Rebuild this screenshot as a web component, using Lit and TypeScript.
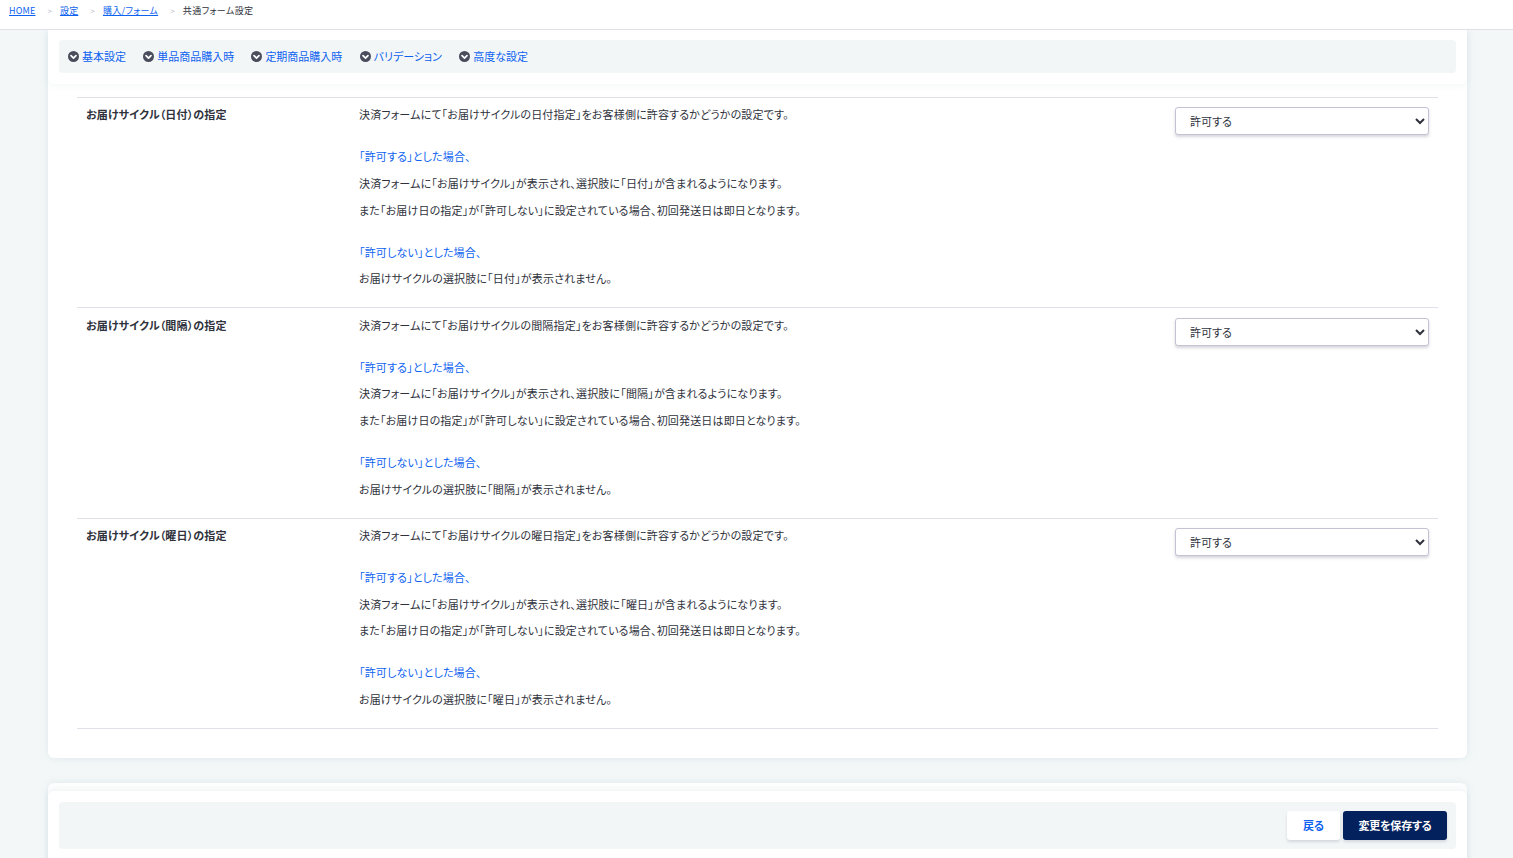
import { LitElement, html, css } from "lit";
import { customElement } from "lit/decorators.js";

const FONT = css`"Noto Sans CJK JP", "Noto Sans", sans-serif`;

@customElement("app-root")
export class AppRoot extends LitElement {
  static styles = css`
    :host {
      display: block;
      height: 858px;
      overflow: hidden;
      background: #f3f7f8;
      font-family: ${FONT};
      font-size: 11px;
      line-height: 15.4px;
      color: #2f323c;
      font-feature-settings: "palt";
    }
    a { color: #0d62f0; }
    .crumbs {
      height: 30px;
      box-sizing: border-box;
      background: #fff;
      border-bottom: 1px solid #e0e0ea;
      display: flex;
      align-items: flex-start;
      padding: 2.6px 0 0 9px;
      font-size: 9px;
      letter-spacing: 0.15px;
      position: relative;
      z-index: 1;
    }
    .crumbs a { text-decoration: underline; }
    .crumbs a.wide { letter-spacing: 0.3px; }
    .crumbs .sep { color: #b5b8c4; margin: 0 8px 0 12px; font-size: 8px; }
    .crumbs .cur { color: #2f323c; letter-spacing: 0.4px; }
    .wrap { padding: 0 46px 0 48px; }
    .section {
      background: #fff;
      border-radius: 0 0 6px 6px;
      box-shadow: 0 0 9px rgba(110, 150, 170, 0.14);
    }
    .nav-card {
      padding: 10px 11px 11px;
      height: 54px;
      box-sizing: border-box;
      background: #fff;
      border-radius: 0 0 6px 6px;
      box-shadow: 0 2px 6px rgba(120, 150, 170, 0.07);
    }
    .nav {
      height: 33px;
      box-sizing: border-box;
      background: #f3f6f7;
      border-radius: 4px;
      display: flex;
      align-items: center;
      padding-left: 9px;
      gap: 17.2px;
    }
    .nav a {
      display: flex;
      align-items: center;
      gap: 3px;
      text-decoration: none;
    }
    .nav svg { width: 11px; height: 11px; display: block; }
    .form-card { padding: 13px 29px 29px; }
    .row {
      display: grid;
      grid-template-columns: 273px 1fr 254px;
      padding: 9.4px 9px 0;
      border-top: 1px solid #e0e0ea;
      height: 210.4px;
      box-sizing: border-box;
    }
    .rows { border-bottom: 1px solid #e0e0ea; }
    .label { font-weight: 700; letter-spacing: 0.15px; }
    .desc { letter-spacing: 0.165px; }
    .desc p { margin: 0 0 11.2px; }
    .desc .head { margin-top: 26.6px; color: #0d62f0; }
    select {
      display: block;
      width: 254px;
      height: 28px;
      box-sizing: border-box;
      border: 1px solid #c3c3d3;
      border-radius: 3px;
      background: #fff;
      box-shadow: 0 2px 3px rgba(90, 90, 120, 0.25);
      padding: 0 0 0 10px;
      font-family: inherit;
      font-size: 11px;
      color: #2f323c;
      font-feature-settings: "palt";
    }
    .bottom-section {
      margin-top: 25px;
      height: 100px;
      padding-top: 8px;
      background: #fcfdfd;
      border-radius: 6px 6px 0 0;
      box-shadow: 0 0 9px rgba(110, 150, 170, 0.14);
    }
    .bottom-card {
      height: 92px;
      box-sizing: border-box;
      background: #fff;
      border-radius: 6px 6px 0 0;
      box-shadow: 0 -1px 5px rgba(120, 150, 170, 0.1);
      padding: 11px 11px 0;
    }
    .actions {
      height: 47px;
      box-sizing: border-box;
      background: #f3f6f7;
      border-radius: 4px;
      display: flex;
      justify-content: flex-end;
      align-items: center;
      gap: 3px;
      padding: 0 9px;
    }
    .btn {
      height: 29px;
      border-radius: 3px;
      display: flex;
      align-items: center;
      justify-content: center;
      font-weight: 700;
      box-shadow: 0 2px 3px rgba(90, 100, 120, 0.2);
    }
    .back { width: 53px; background: #fff; color: #0d62f0; }
    .save { width: 104px; background: #02215d; color: #fff; letter-spacing: -0.2px; }
  `;

  private icon() {
    return html`<svg viewBox="0 0 12 12" aria-hidden="true">
      <circle cx="6" cy="6" r="6" fill="#4a4d5c"></circle>
      <path d="M3.3 5 6 7.7 8.7 5" fill="none" stroke="#fff" stroke-width="1.9" stroke-linecap="round" stroke-linejoin="round"></path>
    </svg>`;
  }

  private row(name: string) {
    return html`<div class="row">
      <div class="label">お届けサイクル（${name}）の指定</div>
      <div class="desc">
        <p>決済フォームにて「お届けサイクルの${name}指定」をお客様側に許容するかどうかの設定です。</p>
        <p class="head">「許可する」とした場合、</p>
        <p>決済フォームに「お届けサイクル」が表示され、選択肢に「${name}」が含まれるようになります。</p>
        <p>また「お届け日の指定」が「許可しない」に設定されている場合、初回発送日は即日となります。</p>
        <p class="head">「許可しない」とした場合、</p>
        <p>お届けサイクルの選択肢に「${name}」が表示されません。</p>
      </div>
      <select><option>許可する</option><option>許可しない</option></select>
    </div>`;
  }

  render() {
    const tabs = ["基本設定", "単品商品購入時", "定期商品購入時", "バリデーション", "高度な設定"];
    return html`
      <div class="crumbs">
        <a href="#">HOME</a><span class="sep">&gt;</span>
        <a href="#">設定</a><span class="sep">&gt;</span>
        <a class="wide" href="#">購入/フォーム</a><span class="sep">&gt;</span>
        <span class="cur">共通フォーム設定</span>
      </div>
      <div class="wrap">
        <div class="section">
          <div class="nav-card">
            <div class="nav">
              ${tabs.map((t) => html`<a href="#">${this.icon()}${t}</a>`)}
            </div>
          </div>
          <div class="form-card">
            <div class="rows">
              ${["日付", "間隔", "曜日"].map((n) => this.row(n))}
            </div>
          </div>
        </div>
        <div class="bottom-section">
          <div class="bottom-card">
            <div class="actions">
              <div class="btn back">戻る</div>
              <div class="btn save">変更を保存する</div>
            </div>
          </div>
        </div>
      </div>
    `;
  }
}
